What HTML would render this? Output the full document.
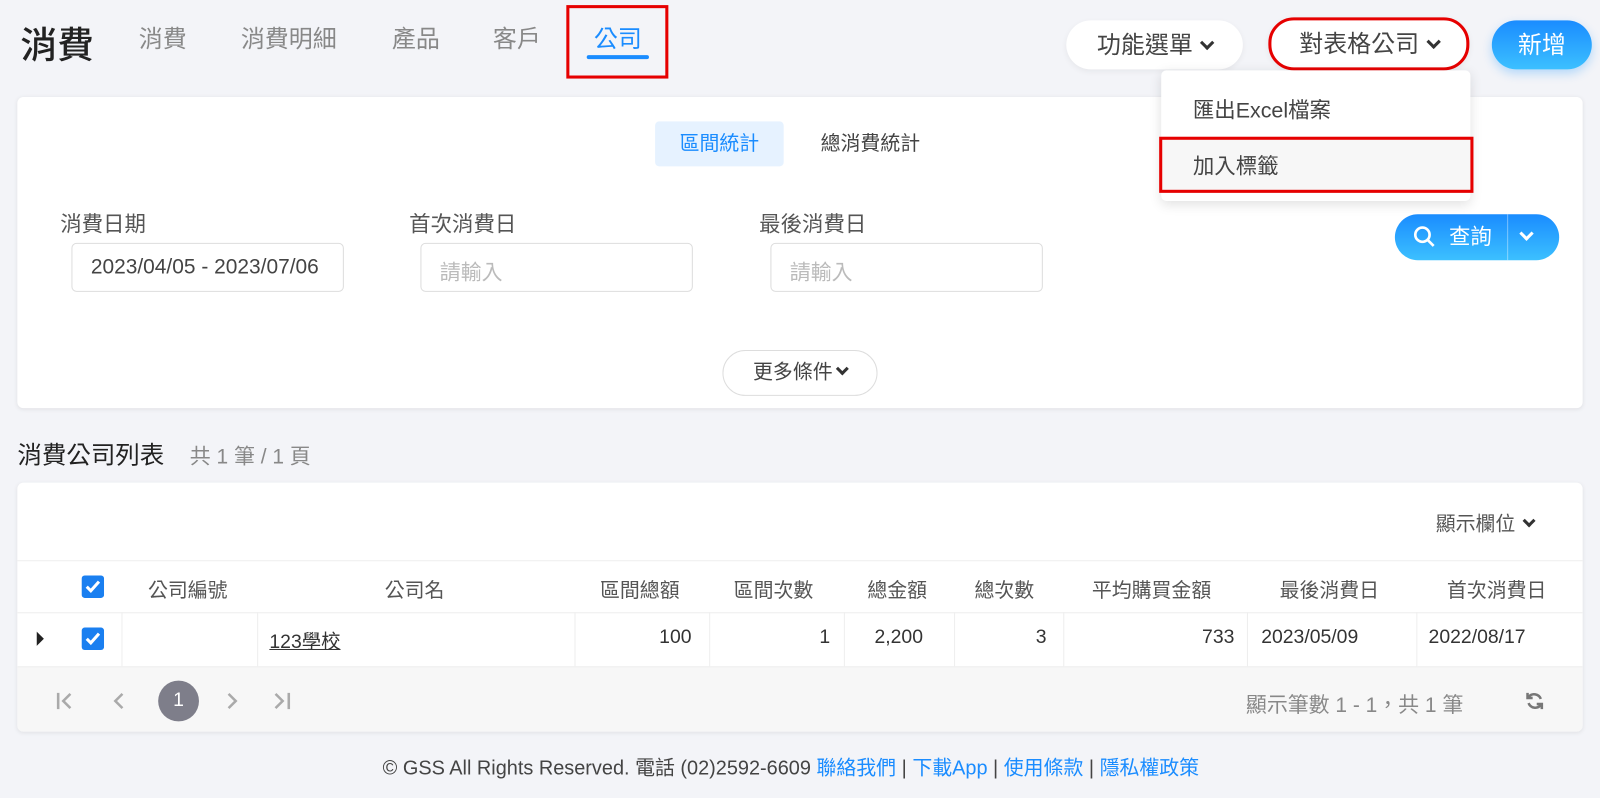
<!DOCTYPE html><html><head><meta charset="utf-8"><style>
*{box-sizing:border-box;margin:0;padding:0}
body{width:1600px;height:798px;background:#f3f4f8;font-family:"Liberation Sans","Noto Sans CJK TC",sans-serif;overflow:hidden;color:#333}
#w{position:absolute;left:0;top:0;width:1568px;height:782px;transform:scale(1.0204);transform-origin:0 0}
.a{position:absolute}
.tab{position:absolute;top:19px;font-size:23.5px;color:#888}
.card{position:absolute;background:#fff;border-radius:6px;box-shadow:0 1px 4px rgba(0,0,0,.08)}
.inp{position:absolute;top:238px;width:267px;height:48px;border:1px solid #ddd;border-radius:5px;font-size:20.5px;padding:11px 18px;color:#bbb;white-space:nowrap}
.lbl{position:absolute;top:204px;font-size:21px;color:#555}
.pill{position:absolute;border-radius:25px;background:#fff;box-shadow:0 2px 6px rgba(0,0,0,.06);font-size:23.5px;color:#444;text-align:center}
.chev{display:inline-block;width:10px;height:10px;border-right:3.5px solid #333;border-bottom:3.5px solid #333;transform:rotate(45deg);margin-left:9px;position:relative;top:-5px}
.th{position:absolute;top:562px;font-size:19.5px;color:#555}
.td{position:absolute;top:614px;font-size:19px;color:#333}
.vl{position:absolute;top:600px;width:1px;height:53px;background:#eee}
</style></head><body><div id="w">
<div class="a" style="left:20px;top:16px;font-size:36px;color:#222;font-weight:500">消費</div>
<div class="tab" style="left:136px">消費</div>
<div class="tab" style="left:236px">消費明細</div>
<div class="tab" style="left:384px">產品</div>
<div class="tab" style="left:483px">客戶</div>
<div class="tab" style="left:582px;color:#1a8cff">公司</div>
<div class="a" style="left:575px;top:54px;width:61px;height:4px;background:#1a8cff;border-radius:2px"></div>
<div class="a" style="left:555px;top:5px;width:100px;height:72px;border:3px solid #e60000"></div>

<div class="pill" style="left:1045px;top:20px;width:173px;height:48px;line-height:48px">功能選單<span class="chev"></span></div>
<div class="pill" style="left:1243px;top:17px;width:197px;height:52px;border:3px solid #e60000;line-height:46px">對表格公司<span class="chev"></span></div>
<div class="pill" style="left:1462px;top:20px;width:98px;height:48px;line-height:48px;background:linear-gradient(#1a8cff,#3cc0ff);color:#fff;box-shadow:0 4px 10px rgba(30,150,255,.3)">新增</div>

<div class="card" style="left:17px;top:95px;width:1534px;height:305px"></div>
<div class="a" style="left:642px;top:119px;width:126px;height:44px;background:#e6f2ff;border-radius:4px;color:#1a8cff;font-size:19.5px;text-align:center;line-height:44px">區間統計</div>
<div class="a" style="left:790px;top:119px;width:126px;height:44px;color:#444;font-size:19.5px;text-align:center;line-height:44px">總消費統計</div>
<div class="lbl" style="left:59px">消費日期</div>
<div class="lbl" style="left:401px">首次消費日</div>
<div class="lbl" style="left:744px">最後消費日</div>
<div class="inp" style="left:70px;color:#444">2023/04/05 - 2023/07/06</div>
<div class="inp" style="left:412px">請輸入</div>
<div class="inp" style="left:755px">請輸入</div>
<div class="a" style="left:1367px;top:210px;width:161px;height:45px;border-radius:23px;background:linear-gradient(#1a8cff,#3cc0ff);color:#fff;font-size:21px;line-height:45px">
<svg class="a" style="left:18px;top:11px" width="22" height="22" viewBox="0 0 22 22"><circle cx="9" cy="9" r="7" fill="none" stroke="#fff" stroke-width="2.6"/><path d="M14 14l6 6" stroke="#fff" stroke-width="2.6"/></svg>
<span class="a" style="left:53px">查詢</span>
<div class="a" style="left:110px;top:0;width:1px;height:45px;background:rgba(255,255,255,.4)"></div>
<span class="chev" style="position:absolute;left:124px;top:14px;border-color:#fff;margin:0"></span></div>
<div class="a" style="left:708px;top:343px;width:152px;height:45px;border:1px solid #ddd;border-radius:23px;font-size:19.5px;text-align:center;line-height:43px;color:#444;background:#fff">更多條件<span class="chev" style="width:9px;height:9px;margin-left:5px"></span></div>

<div class="a" style="left:1138px;top:69px;width:303px;height:128px;background:#fff;border-radius:5px;box-shadow:0 3px 12px rgba(0,0,0,.12)"></div>
<div class="a" style="left:1169px;top:92px;font-size:21px;color:#444">匯出Excel檔案</div>
<div class="a" style="left:1136px;top:134px;width:308px;height:55px;border:3px solid #e60000;background:#f7f7f7;font-size:21px;color:#444;padding:10px 30px">加入標籤</div>

<div class="a" style="left:17px;top:426px;font-size:24px;color:#222">消費公司列表</div>
<div class="a" style="left:186px;top:430px;font-size:20.5px;color:#888">共 1 筆 / 1 頁</div>

<div class="card" style="left:17px;top:473px;width:1534px;height:244px;overflow:hidden">
<div class="a" style="left:0;top:76px;width:100%;height:1px;background:#eee"></div>
<div class="a" style="left:0;top:127px;width:100%;height:1px;background:#eee"></div>
<div class="a" style="left:0;top:180px;width:100%;height:64px;background:#f7f7f7;border-top:1px solid #eee"></div>
</div>
<div class="a" style="left:1407px;top:497px;font-size:19.5px;color:#555">顯示欄位<span class="chev" style="width:9px;height:9px"></span></div>
<svg class="a" style="left:80px;top:564px" width="22" height="22"><rect width="22" height="22" rx="3" fill="#1a7ff0"/><path d="M5 11l4 4 8-9" stroke="#fff" stroke-width="3" fill="none"/></svg>
<div class="th" style="left:145px">公司編號</div>
<div class="th" style="left:377px">公司名</div>
<div class="th" style="left:588px">區間總額</div>
<div class="th" style="left:719px">區間次數</div>
<div class="th" style="left:850px">總金額</div>
<div class="th" style="left:955px">總次數</div>
<div class="th" style="left:1070px">平均購買金額</div>
<div class="th" style="left:1254px">最後消費日</div>
<div class="th" style="left:1418px">首次消費日</div>
<div class="a" style="left:36px;top:619px;width:0;height:0;border-left:7px solid #222;border-top:7px solid transparent;border-bottom:7px solid transparent"></div>
<svg class="a" style="left:80px;top:615px" width="22" height="22"><rect width="22" height="22" rx="3" fill="#1a7ff0"/><path d="M5 11l4 4 8-9" stroke="#fff" stroke-width="3" fill="none"/></svg>
<div class="vl" style="left:119px"></div><div class="vl" style="left:252px"></div><div class="vl" style="left:563px"></div><div class="vl" style="left:695px"></div><div class="vl" style="left:827px"></div><div class="vl" style="left:935px"></div><div class="vl" style="left:1042px"></div><div class="vl" style="left:1222px"></div><div class="vl" style="left:1388px"></div>
<div class="td" style="left:264px;text-decoration:underline">123學校</div>
<div class="td" style="left:646px">100</div>
<div class="td" style="left:803px">1</div>
<div class="td" style="left:857px">2,200</div>
<div class="td" style="left:1015px">3</div>
<div class="td" style="left:1178px">733</div>
<div class="td" style="left:1236px">2023/05/09</div>
<div class="td" style="left:1400px">2022/08/17</div>
<svg class="a" style="left:52px;top:677px" width="240" height="20" fill="none" stroke="#aaa" stroke-width="2.5">
<path d="M5 2v16M17 3l-7 7 7 7"/><path d="M68 3l-7 7 7 7"/><path d="M172 3l7 7-7 7"/><path d="M218 3l7 7-7 7M231 2v16"/></svg>
<div class="a" style="left:155px;top:667px;width:40px;height:40px;border-radius:50%;background:#7e7e8a;color:#fff;font-size:19px;text-align:center;line-height:40px">1</div>
<div class="a" style="left:1221px;top:674px;font-size:20.5px;color:#888">顯示筆數 1 - 1，共 1 筆</div>
<svg class="a" style="left:1494px;top:677px" width="20" height="20" fill="none" stroke="#777" stroke-width="2.5"><path d="M16 8a7 7 0 0 0-12-2M4 12a7 7 0 0 0 12 2"/><path d="M3 2v5h5M17 18v-5h-5"/></svg>

<div class="a" style="left:375px;top:736px;font-size:19.5px;color:#444;white-space:nowrap">© GSS All Rights Reserved. 電話 (02)2592-6609 <span style="color:#1a8cff">聯絡我們</span> | <span style="color:#1a8cff">下載App</span> | <span style="color:#1a8cff">使用條款</span> | <span style="color:#1a8cff">隱私權政策</span></div>
</div></body></html>
